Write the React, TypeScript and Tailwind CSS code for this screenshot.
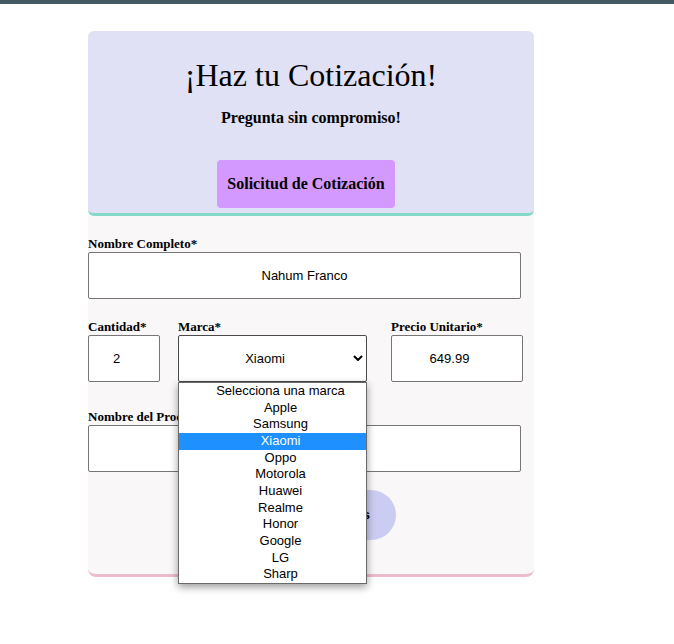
import { useState } from "react";

const brands = [
  "Apple",
  "Samsung",
  "Xiaomi",
  "Oppo",
  "Motorola",
  "Huawei",
  "Realme",
  "Honor",
  "Google",
  "LG",
  "Sharp",
];

const placeholder = "Selecciona una marca";

const labelClass = "block text-[13px] leading-4 font-bold";
const fieldClass =
  "block h-[47px] w-full rounded-xs border border-[#767676] bg-white text-center font-['Liberation_Sans',Arial,sans-serif] text-[13px] text-black outline-none";

function Header() {
  return (
    <header className="flex flex-col items-center rounded-md border-b-3 border-[#86d8c9] bg-[#e0e1f5] pt-[25px] pb-[5px]">
      <h1 className="text-[32px] leading-[38px]">¡Haz tu Cotización!</h1>
      <p className="mt-3.5 text-base leading-5 font-bold">Pregunta sin compromiso!</p>
      <button type="button" className="mt-8 mr-2.5 h-12 rounded-sm bg-[#d499ff] px-2.5 text-base font-bold">
        Solicitud de Cotización
      </button>
    </header>
  );
}

function BrandSelect() {
  const [brand, setBrand] = useState("Xiaomi");
  const options = [placeholder, ...brands];

  return (
    <div className="relative">
      <label htmlFor="marca" className={labelClass}>
        Marca*
      </label>
      <div className="relative">
        <select
          id="marca"
          value={brand}
          onChange={(e) => setBrand(e.target.value)}
          className="block h-[47px] w-full appearance-none rounded-xs border border-[#4a4a4a] bg-white pr-[15px] text-center font-['Liberation_Sans',Arial,sans-serif] text-[13px] text-black outline-none"
        >
          {options.map((name) => (
            <option key={name}>{name}</option>
          ))}
        </select>
        <svg
          viewBox="0 0 10 6"
          className="pointer-events-none absolute top-5 right-1 h-1.5 w-2.5"
          fill="none"
          stroke="black"
          strokeWidth="2"
          aria-hidden="true"
        >
          <path d="M1 1l4 4 4-4" />
        </svg>
      </div>
      <ul className="absolute top-full left-0 z-10 grid h-[202px] w-full grid-rows-12 border border-[#6b6b6b] bg-white text-center font-['Liberation_Sans',Arial,sans-serif] text-[13px] leading-4 shadow-[0_3px_8px_rgba(0,0,0,0.4)]">
        {options.map((name) => (
          <li
            key={name}
            onClick={() => setBrand(name)}
            className={name === brand ? "bg-[#1e90ff] pl-4 text-white" : "pl-4"}
          >
            {name}
          </li>
        ))}
      </ul>
    </div>
  );
}

export default function App() {
  return (
    <div className="min-h-screen bg-white font-['Liberation_Serif','Times_New_Roman',serif] text-black">
      <div className="h-1 bg-[#455a64]" />
      <main className="mt-[27px] ml-[88px] max-w-[446px] rounded-lg border-b-3 border-[#ecbccb] bg-[#f9f7f8]">
        <Header />
        <form className="pt-5 pr-[11px] pb-[34px]" onSubmit={(e) => e.preventDefault()}>
          <div className="pr-0.5">
            <label htmlFor="nombre" className={labelClass}>
              Nombre Completo*
            </label>
            <input id="nombre" type="text" defaultValue="Nahum Franco" className={fieldClass} />
          </div>
          <div className="mt-5 flex">
            <div className="w-[72px]">
              <label htmlFor="cantidad" className={labelClass}>
                Cantidad*
              </label>
              <input id="cantidad" type="number" defaultValue="2" className={fieldClass} />
            </div>
            <div className="mr-6 ml-[18px] flex-1">
              <BrandSelect />
            </div>
            <div className="w-[132px]">
              <label htmlFor="precio" className={labelClass}>
                Precio Unitario*
              </label>
              <input id="precio" type="number" step="0.01" defaultValue="649.99" className={fieldClass} />
            </div>
          </div>
          <div className="mt-[27px] pr-0.5">
            <label htmlFor="producto" className={labelClass}>
              Nombre del Producto*
            </label>
            <input id="producto" type="text" className={fieldClass} />
          </div>
          <div className="mt-[18px] flex justify-center pl-[11px]">
            <button
              type="submit"
              className="h-[50px] w-[170px] rounded-full bg-[#cbccf2] pr-[26px] text-right font-['Liberation_Sans',Arial,sans-serif] text-[13px] font-bold"
            >
              Calcular Totales
            </button>
          </div>
        </form>
      </main>
    </div>
  );
}
